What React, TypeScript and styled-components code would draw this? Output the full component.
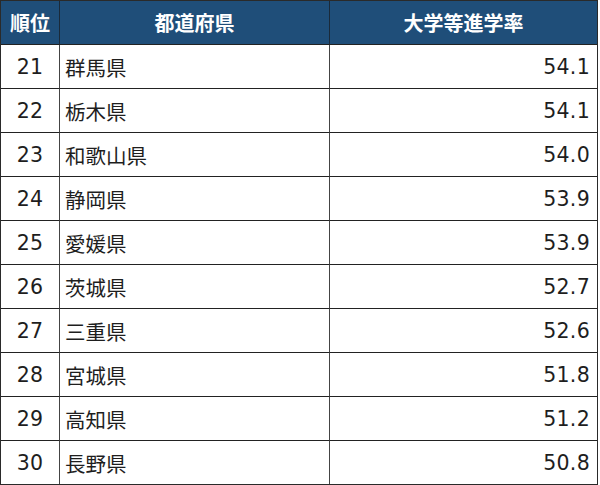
import styled, { createGlobalStyle } from "styled-components";

interface IRow {
  rank: number;
  name: string;
  rate: string;
}

const rows: IRow[] = [
  { rank: 21, name: "群馬県", rate: "54.1" },
  { rank: 22, name: "栃木県", rate: "54.1" },
  { rank: 23, name: "和歌山県", rate: "54.0" },
  { rank: 24, name: "静岡県", rate: "53.9" },
  { rank: 25, name: "愛媛県", rate: "53.9" },
  { rank: 26, name: "茨城県", rate: "52.7" },
  { rank: 27, name: "三重県", rate: "52.6" },
  { rank: 28, name: "宮城県", rate: "51.8" },
  { rank: 29, name: "高知県", rate: "51.2" },
  { rank: 30, name: "長野県", rate: "50.8" },
];

const Global = createGlobalStyle`
  body {
    margin: 0;
    background: #fff;
    font-family: "Noto Sans CJK JP", "DejaVu Sans", sans-serif;
  }
`;

const Table = styled.div`
  width: 598px;
  display: grid;
  grid-template-columns: 59px 270px 1fr;
  border: 1px solid #2a2a2a;
  box-sizing: border-box;
`;

const Head = styled.div<{ $last?: boolean }>`
  height: 43px;
  background: #1f4e79;
  color: #fff;
  font-weight: bold;
  font-size: 20px;
  display: flex;
  align-items: center;
  justify-content: center;
  border-right: ${(p) => (p.$last ? "none" : "1px solid #1a2a3a")};
  border-bottom: 1px solid #222;
`;

const Cell = styled.div<{ $align: "center" | "left" | "right"; $last?: boolean; $bottom?: boolean }>`
  height: 43px;
  display: flex;
  align-items: center;
  justify-content: ${(p) =>
    p.$align === "center" ? "center" : p.$align === "left" ? "flex-start" : "flex-end"};
  padding: ${(p) => (p.$align === "left" ? "0 0 0 5px" : p.$align === "right" ? "0 7px 0 0" : "0")};
  font-size: 20.5px;
  color: #1e1e1e;
  border-right: ${(p) => (p.$last ? "none" : "1px solid #444")};
  border-bottom: ${(p) => (p.$bottom ? "none" : "1px solid #222")};
`;

const Num = styled.span`
  font-family: "DejaVu Sans", sans-serif;
  font-size: 20.5px;
  letter-spacing: 0.3px;
`;

const App = () => {
  return (
    <>
      <Global />
      <Table>
        <Head>順位</Head>
        <Head>都道府県</Head>
        <Head $last>大学等進学率</Head>
        {rows.map((r, i) => {
          const bottom = i === rows.length - 1;
          return [
            <Cell key={`r${r.rank}`} $align="center" $bottom={bottom}>
              <Num>{r.rank}</Num>
            </Cell>,
            <Cell key={`n${r.rank}`} $align="left" $bottom={bottom}>
              {r.name}
            </Cell>,
            <Cell key={`v${r.rank}`} $align="right" $last $bottom={bottom}>
              <Num>{r.rate}</Num>
            </Cell>,
          ];
        })}
      </Table>
    </>
  );
};

export default App;
